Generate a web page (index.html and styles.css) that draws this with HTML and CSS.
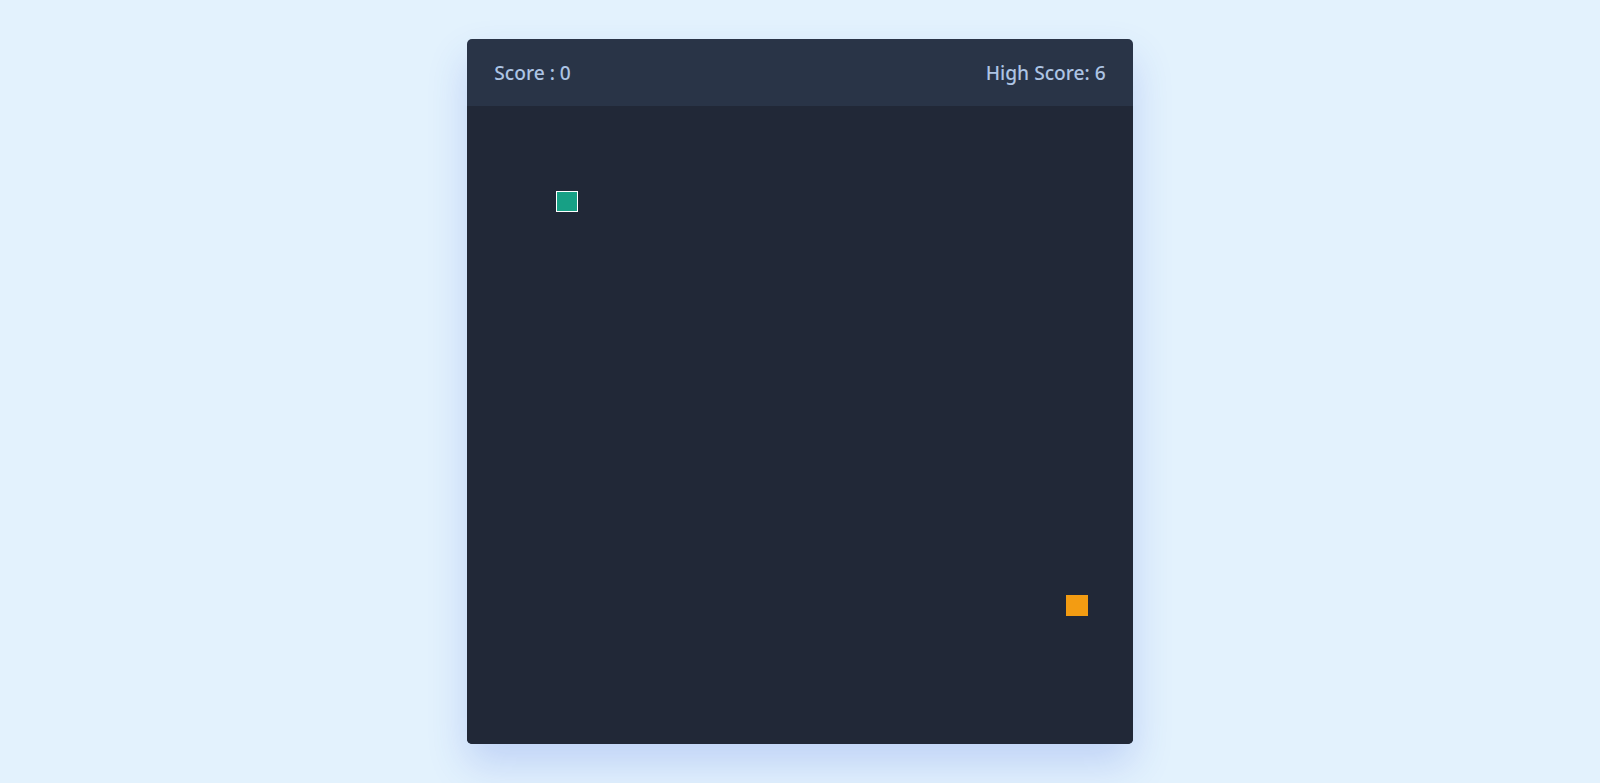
FILE: index.html
```html
<!DOCTYPE html>
<html lang="en">
<head>
<meta charset="utf-8">
<title>Snake Game</title>
<link rel="stylesheet" href="styles.css">
</head>
<body>
  <div class="wrapper">
    <div class="game-details">
      <span class="score">Score : 0</span>
      <span class="high-score">High Score: 6</span>
    </div>
    <div class="play-board">
      <div class="head"></div>
      <div class="food"></div>
    </div>
  </div>
</body>
</html>
```

FILE: styles.css
```css
* {
  margin: 0;
  padding: 0;
  box-sizing: border-box;
}

body {
  display: flex;
  align-items: center;
  justify-content: center;
  min-height: 100vh;
  background: #e3f2fd;
  font-family: "Noto Sans", "Open Sans", sans-serif;
}

.wrapper {
  width: 85vmin;
  height: 90vmin;
  display: flex;
  overflow: hidden;
  flex-direction: column;
  border-radius: 5px;
  background: #293447;
  box-shadow: 0 20px 40px rgba(52, 87, 220, 0.2);
}

.game-details {
  color: #adc4e4;
  font-weight: 500;
  font-size: 1.2rem;
  padding: 20px 27px;
  display: flex;
  justify-content: space-between;
}

.play-board {
  flex: 1;
  width: 100%;
  display: grid;
  background: #212837;
  grid-template: repeat(30, 1fr) / repeat(30, 1fr);
}

.head {
  grid-area: 5 / 5;
  background: #17a085;
  border: 1px solid #ffffff;
}

.food {
  grid-area: 24 / 28;
  background: #f39c12;
}
```
